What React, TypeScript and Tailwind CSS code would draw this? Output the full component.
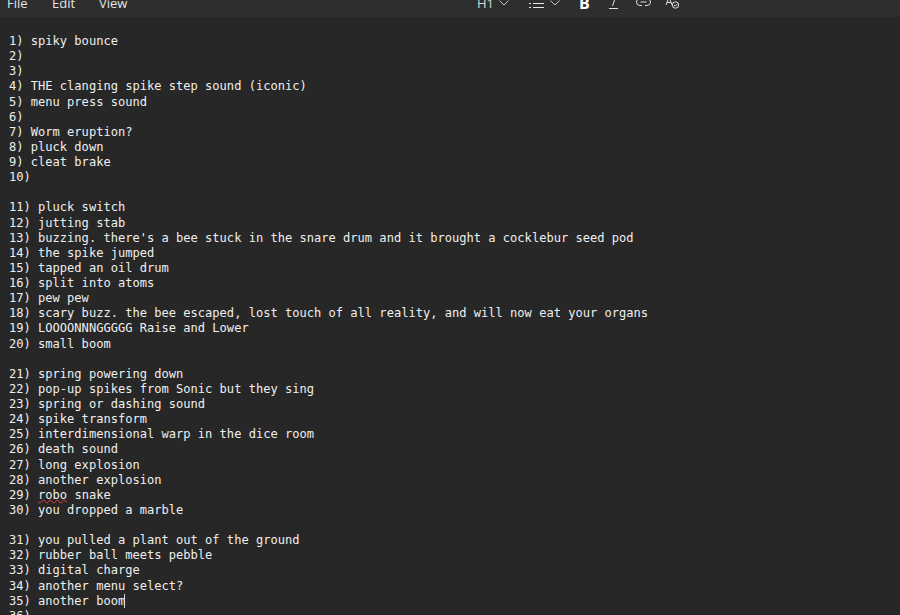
const firstBlock = [
  '1) spiky bounce',
  '2)',
  '3)',
  '4) THE clanging spike step sound (iconic)',
  '5) menu press sound',
  '6)',
  '7) Worm eruption?',
  '8) pluck down',
  '9) cleat brake',
  '10)',
  '',
  '11) pluck switch',
  '12) jutting stab',
  "13) buzzing. there's a bee stuck in the snare drum and it brought a cocklebur seed pod",
  '14) the spike jumped',
  '15) tapped an oil drum',
  '16) split into atoms',
  '17) pew pew',
  '18) scary buzz. the bee escaped, lost touch of all reality, and will now eat your organs',
  '19) LOOOONNNGGGGG Raise and Lower',
  '20) small boom',
  '',
  '21) spring powering down',
  '22) pop-up spikes from Sonic but they sing',
  '23) spring or dashing sound',
  '24) spike transform',
  '25) interdimensional warp in the dice room',
  '26) death sound',
  '27) long explosion',
  '28) another explosion',
]

const secondBlock = [
  '30) you dropped a marble',
  '',
  '31) you pulled a plant out of the ground',
  '32) rubber ball meets pebble',
  '33) digital charge',
  '34) another menu select?',
]

function Chevron() {
  return (
    <svg className="block" width="10" height="6" viewBox="0 0 10 6" fill="none" stroke="#c8c8c8" strokeWidth="1">
      <path d="M0.5 0.5 L5 5 L9.5 0.5" />
    </svg>
  )
}

function Toolbar() {
  return (
    <div className="ml-[351px] flex items-end text-[#d8d8d8]">
      <span className="w-[22px] text-[13px] leading-[20px]">H1</span>
      <span className="mb-[7px]"><Chevron /></span>
      <svg className="mb-[5px] ml-[20px] block" width="15" height="10" viewBox="0 0 15 10" stroke="#e8e8e8" fill="none">
        <path d="M0 1.5h2M4 1.5h11M0 5.5h2M4 5.5h11M0 9.5h2M4 9.5h11" />
      </svg>
      <span className="mb-[7px] ml-[6px]"><Chevron /></span>
      <span className="ml-[19px] w-[29px] text-[16px] font-bold leading-[20px] text-white">B</span>
      <svg className="mb-[4px] block" width="12" height="12" viewBox="0 0 12 12" stroke="#e0e0e0" fill="none">
        <path d="M7.5 0 L4.5 9 M1 11.5 H10" />
      </svg>
      <svg className="mb-[5px] ml-[16px] block" width="15" height="10" viewBox="0 0 15 10" stroke="#e0e0e0" fill="none">
        <path d="M5 0.5 H4 a3.5 3.5 0 0 0 0 7 H6 M9 0.5 H11 a3.5 3.5 0 0 1 0 7 H9 M4.5 4 H10.5" />
      </svg>
      <svg className="mb-[4px] ml-[14px] block" width="15" height="13" viewBox="0 0 15 13" stroke="#e0e0e0" fill="none">
        <path d="M1 9 L4 1 L7 9 M2 6.5 H6 M8 2 H12" />
        <circle cx="10.5" cy="9" r="3.2" />
        <path d="M9 9 L10.2 10.2 L12.5 7.8" />
      </svg>
    </div>
  )
}

export default function App() {
  return (
    <div className="flex h-[615px] w-[900px] flex-col overflow-hidden bg-[#272727]">
      <div className="flex h-[17px] shrink-0 items-end overflow-hidden bg-[#2e2e2e] pb-[4px] font-['Open_Sans',sans-serif] text-[13px] text-[#e4e4e4]">
        <div className="flex items-end leading-[20px]">
          <span className="ml-[7px] w-[45px]">File</span>
          <span className="w-[47px]">Edit</span>
          <span className="w-[27px]">View</span>
        </div>
        <Toolbar />
      </div>
      <div className="whitespace-pre pl-[9px] pt-[17px] font-['DejaVu_Sans_Mono',monospace] text-[12.07px] leading-[15.135px] text-[#efefef]">
        {firstBlock.map((line, i) => (
          <div key={i} className="h-[15.135px]">{line}</div>
        ))}
        <div className="h-[15.135px]">
          29) <span className="underline decoration-[#e04040] decoration-wavy decoration-1 underline-offset-[0px]">robo</span> snake
        </div>
        {secondBlock.map((line, i) => (
          <div key={i} className="h-[15.135px]">{line}</div>
        ))}
        <div className="h-[15.135px]">
          35) another boom<span className="ml-[-1px] inline-block h-[14px] w-px bg-[#d8d8d8] align-[-3px]" />
        </div>
        <div className="h-[15.135px]">36)</div>
      </div>
    </div>
  )
}
